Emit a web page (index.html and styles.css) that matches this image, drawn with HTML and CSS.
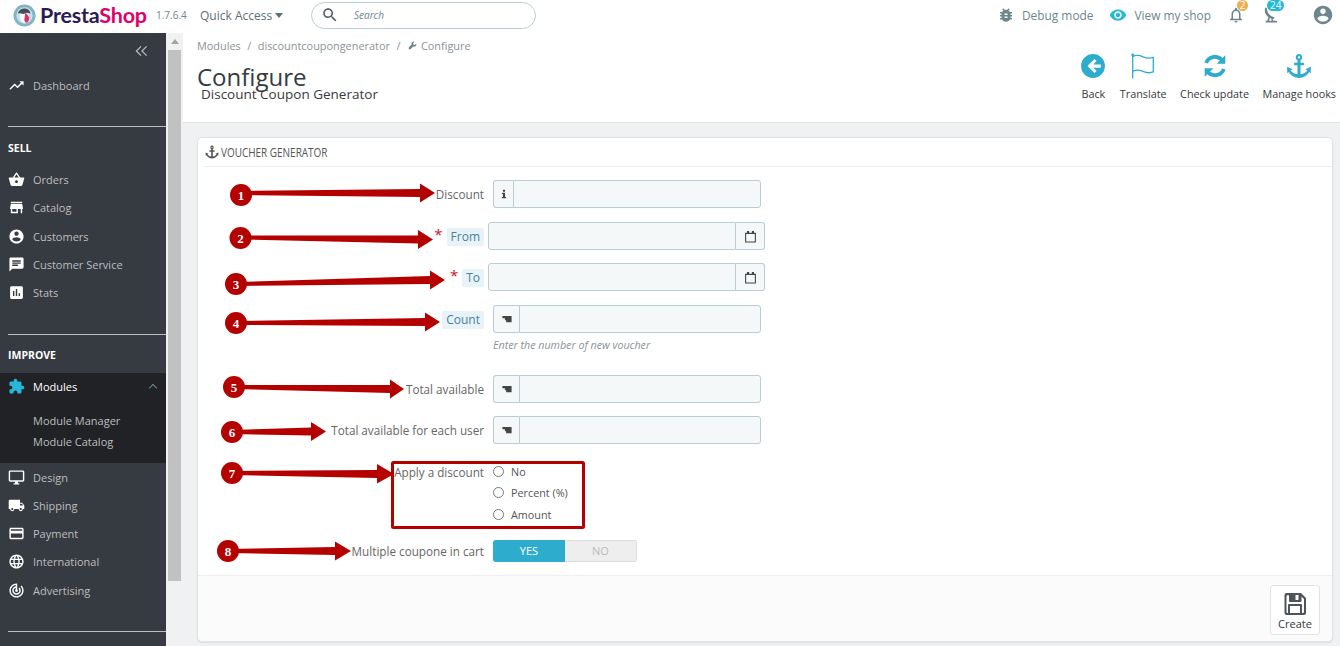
FILE: index.html
```html
<!DOCTYPE html>
<html lang="en">
<head>
<meta charset="utf-8">
<title>Configure - Discount Coupon Generator</title>
<link rel="stylesheet" href="styles.css">
</head>
<body>
<svg class="sprite" aria-hidden="true">
  <symbol id="i-trend" viewBox="0 0 24 24"><path d="M16 6l2.29 2.29-4.88 4.88-4-4L2 16.59 3.41 18l6-6 4 4 6.3-6.29L22 12V6z"/></symbol>
  <symbol id="i-basket" viewBox="0 0 24 24"><path d="M17.21 9l-4.38-6.56c-.19-.28-.51-.42-.83-.42-.32 0-.64.14-.83.43L6.79 9H2c-.55 0-1 .45-1 1 0 .09.01.18.04.27l2.54 9.27c.23.84 1 1.46 1.92 1.46h13c.92 0 1.69-.62 1.93-1.46l2.54-9.27L23 10c0-.55-.45-1-1-1h-4.79zM9 9l3-4.4L15 9H9zm3 8c-1.1 0-2-.9-2-2s.9-2 2-2 2 .9 2 2-.9 2-2 2z"/></symbol>
  <symbol id="i-store" viewBox="0 0 24 24"><path d="M20 4H4v2h16V4zm1 10v-2l-1-5H4l-1 5v2h1v6h10v-6h4v6h2v-6h1zm-9 4H6v-4h6v4z"/></symbol>
  <symbol id="i-account" viewBox="0 0 24 24"><path d="M12 2C6.48 2 2 6.48 2 12s4.48 10 10 10 10-4.48 10-10S17.52 2 12 2zm0 3c1.66 0 3 1.34 3 3s-1.34 3-3 3-3-1.34-3-3 1.34-3 3-3zm0 14.2c-2.5 0-4.71-1.28-6-3.22.03-1.99 4-3.08 6-3.08 1.99 0 5.97 1.09 6 3.08-1.29 1.94-3.5 3.22-6 3.22z"/></symbol>
  <symbol id="i-chat" viewBox="0 0 24 24"><path d="M20 2H4c-1.1 0-1.99.9-1.99 2L2 22l4-4h14c1.1 0 2-.9 2-2V4c0-1.1-.9-2-2-2zM6 9h12v2H6V9zm8 5H6v-2h8v2zm4-6H6V6h12v2z"/></symbol>
  <symbol id="i-stats" viewBox="0 0 24 24"><path d="M19 3H5c-1.1 0-2 .9-2 2v14c0 1.1.9 2 2 2h14c1.1 0 2-.9 2-2V5c0-1.1-.9-2-2-2zM9 17H7v-7h2v7zm4 0h-2V7h2v10zm4 0h-2v-4h2v4z"/></symbol>
  <symbol id="i-puzzle" viewBox="0 0 24 24"><path d="M20.5 11H19V7c0-1.1-.9-2-2-2h-4V3.5C13 2.12 11.88 1 10.5 1S8 2.12 8 3.5V5H4c-1.1 0-1.99.9-1.99 2v3.8H3.5c1.49 0 2.7 1.21 2.7 2.7s-1.21 2.7-2.7 2.7H2V20c0 1.1.9 2 2 2h3.8v-1.5c0-1.49 1.21-2.7 2.7-2.7 1.49 0 2.7 1.21 2.7 2.7V22H17c1.1 0 2-.9 2-2v-4h1.5c1.38 0 2.5-1.12 2.5-2.5S21.88 11 20.5 11z"/></symbol>
  <symbol id="i-desktop" viewBox="0 0 24 24"><path d="M21 2H3c-1.1 0-2 .9-2 2v12c0 1.1.9 2 2 2h7v2H8v2h8v-2h-2v-2h7c1.1 0 2-.9 2-2V4c0-1.1-.9-2-2-2zm0 14H3V4h18v12z"/></symbol>
  <symbol id="i-truck" viewBox="0 0 24 24"><path d="M20 8h-3V4H3c-1.1 0-2 .9-2 2v11h2c0 1.66 1.34 3 3 3s3-1.34 3-3h6c0 1.66 1.34 3 3 3s3-1.34 3-3h2v-5l-3-4zM6 18.5c-.83 0-1.5-.67-1.5-1.5s.67-1.5 1.5-1.5 1.5.67 1.5 1.5-.67 1.5-1.5 1.5zm13.5-9l1.96 2.5H17V9.5h2.5zm-1.5 9c-.83 0-1.5-.67-1.5-1.5s.67-1.5 1.5-1.5 1.5.67 1.5 1.5-.67 1.5-1.5 1.5z"/></symbol>
  <symbol id="i-card" viewBox="0 0 24 24"><path d="M20 4H4c-1.11 0-1.99.89-1.99 2L2 18c0 1.11.89 2 2 2h16c1.11 0 2-.89 2-2V6c0-1.11-.89-2-2-2zm0 14H4v-6h16v6zm0-10H4V6h16v2z"/></symbol>
  <symbol id="i-globe" viewBox="0 0 24 24"><path d="M11.99 2C6.47 2 2 6.48 2 12s4.47 10 9.99 10C17.52 22 22 17.52 22 12S17.52 2 11.99 2zm6.93 6h-2.95c-.32-1.25-.78-2.45-1.38-3.56 1.84.63 3.37 1.91 4.33 3.56zM12 4.04c.83 1.2 1.48 2.53 1.91 3.96h-3.82c.43-1.43 1.08-2.76 1.91-3.96zM4.26 14C4.1 13.36 4 12.69 4 12s.1-1.36.26-2h3.38c-.08.66-.14 1.32-.14 2 0 .68.06 1.34.14 2H4.26zm.82 2h2.95c.32 1.25.78 2.45 1.38 3.56-1.84-.63-3.37-1.9-4.33-3.56zm2.95-8H5.08c.96-1.66 2.49-2.93 4.33-3.56C8.81 5.55 8.35 6.75 8.03 8zM12 19.96c-.83-1.2-1.48-2.53-1.91-3.96h3.82c-.43 1.43-1.08 2.76-1.91 3.96zM14.34 14H9.66c-.09-.66-.16-1.32-.16-2 0-.68.07-1.35.16-2h4.68c.09.65.16 1.32.16 2 0 .68-.07 1.34-.16 2zm.25 5.56c.6-1.11 1.06-2.31 1.38-3.56h2.95c-.96 1.65-2.49 2.93-4.33 3.56zM16.36 14c.08-.66.14-1.32.14-2 0-.68-.06-1.34-.14-2h3.38c.16.64.26 1.31.26 2s-.1 1.36-.26 2h-3.38z"/></symbol>
  <symbol id="i-radar" viewBox="0 0 24 24"><path d="M19.07 4.93l-1.41 1.41C19.1 7.79 20 9.79 20 12c0 4.42-3.58 8-8 8s-8-3.58-8-8c0-4.08 3.05-7.44 7-7.93v2.02C8.16 6.57 6 9.03 6 12c0 3.31 2.69 6 6 6s6-2.69 6-6c0-1.66-.67-3.16-1.76-4.24l-1.41 1.41C15.55 9.9 16 10.9 16 12c0 2.21-1.79 4-4 4s-4-1.79-4-4c0-1.86 1.28-3.41 3-3.86v2.14c-.6.35-1 .98-1 1.72 0 1.1.9 2 2 2s2-.9 2-2c0-.74-.4-1.38-1-1.72V2h-1C6.48 2 2 6.48 2 12s4.48 10 10 10 10-4.48 10-10c0-2.76-1.12-5.26-2.93-7.07z"/></symbol>
  <symbol id="i-bug" viewBox="0 0 24 24"><path d="M20 8h-2.81c-.45-.78-1.07-1.45-1.82-1.96L17 4.41 15.59 3l-2.17 2.17C12.96 5.06 12.49 5 12 5c-.49 0-.96.06-1.41.17L8.41 3 7 4.41l1.62 1.63C7.88 6.55 7.26 7.22 6.81 8H4v2h2.09c-.05.33-.09.66-.09 1v1H4v2h2v1c0 .34.04.67.09 1H4v2h2.81c1.04 1.79 2.97 3 5.19 3s4.15-1.21 5.19-3H20v-2h-2.09c.05-.33.09-.66.09-1v-1h2v-2h-2v-1c0-.34-.04-.67-.09-1H20V8zm-6 8h-4v-2h4v2zm0-4h-4v-2h4v2z"/></symbol>
  <symbol id="i-eye" viewBox="0 0 24 24"><path d="M12 4.5C7 4.5 2.73 7.61 1 12c1.73 4.39 6 7.5 11 7.5s9.27-3.11 11-7.5c-1.73-4.39-6-7.5-11-7.5zM12 17c-2.76 0-5-2.24-5-5s2.24-5 5-5 5 2.24 5 5-2.24 5-5 5zm0-8c-1.66 0-3 1.34-3 3s1.34 3 3 3 3-1.34 3-3-1.34-3-3-3z"/></symbol>
  <symbol id="i-bell" viewBox="0 0 24 24"><path d="M12 22c1.1 0 2-.9 2-2h-4c0 1.1.9 2 2 2zm6-6v-5c0-3.07-1.63-5.64-4.5-6.32V4c0-.83-.67-1.5-1.5-1.5s-1.5.67-1.5 1.5v.68C7.64 5.36 6 7.92 6 11v5l-2 2v1h16v-1l-2-2zm-2 1H8v-6c0-2.48 1.51-4.5 4-4.5s4 2.02 4 4.5v6z"/></symbol>
  <symbol id="i-dish" viewBox="0 0 24 24"><path d="M4.500 2C2 8 6 16 15 17.500l2-2.500C10.500 14 6.500 9 6.500 3zM8.500 15l-1.500 4.500H5V22h15v-2.500h-5l-.8-2.300-2-.6.800 2.900H9.500l1-3.300z"/></symbol>
  <symbol id="i-search" viewBox="0 0 24 24"><path d="M15.500 14h-.79l-.28-.27C15.410 12.590 16 11.110 16 9.500 16 5.910 13.090 3 9.500 3S3 5.910 3 9.500 5.910 16 9.500 16c1.610 0 3.090-.59 4.230-1.570l.27.28v.79l5 4.990L20.490 19l-4.990-5zm-6 0C7.010 14 5 11.990 5 9.500S7.010 5 9.500 5 14 7.010 14 9.500 11.990 14 9.500 14z"/></symbol>
  <symbol id="i-anchor" viewBox="0 0 24 24"><path d="M12 1a3 3 0 0 0-1.400 5.650V9H7.500v2.400h3.100v8.300c-3-.3-5.300-1.700-6.300-3.700l1.800-1.100L1 12.800l.2 5.800 1.500-1c1.600 3 5 5.400 9.300 5.400s7.700-2.400 9.300-5.400l1.500 1 .2-5.800-5.100 2.100 1.800 1.100c-1 2-3.300 3.400-6.300 3.700v-8.300h3.100V9h-3.100V6.650A3 3 0 0 0 12 1zm0 1.900a1.100 1.100 0 1 1 0 2.200 1.100 1.100 0 0 1 0-2.200z"/></symbol>
  <symbol id="i-back" viewBox="0 0 24 24"><path d="M12 1a11 11 0 1 0 0 22 11 11 0 0 0 0-22zm1.400 4.500l1.900 1.900-3.100 3.100h7v3h-7l3.100 3.100-1.900 1.900L6.900 12z"/></symbol>
  <symbol id="i-flag" viewBox="0 0 24 24"><path class="flag-line" d="M2.500 1.500v22M2.500 3.500c3-2 6-1.500 9.500 0s6 1.700 9.500.5v13.500c-3.500 1.300-6 1-9.500-.5s-6.500-1.800-9.500 0"/><circle cx="2.500" cy="1.800" r="1.300"/></symbol>
  <symbol id="i-sync" viewBox="0 0 24 24"><path d="M21.500 2v8h-8l3-3a6.800 6.800 0 0 0-11 2.800l-3.300-1A10.200 10.200 0 0 1 19 4.500zM2.500 22v-8h8l-3 3a6.800 6.800 0 0 0 11-2.800l3.300 1A10.200 10.200 0 0 1 5 19.500z"/></symbol>
  <symbol id="i-save" viewBox="0 0 24 24"><path d="M3.500 1H18l5 5v15a2 2 0 0 1-2 2H3.500a2 2 0 0 1-2-2V3a2 2 0 0 1 2-2zm1 2.200a1 1 0 0 0-1 1V20a1 1 0 0 0 1 1H5v-8a1 1 0 0 1 1-1h12a1 1 0 0 1 1 1v8h1a1 1 0 0 0 1-1V7l-2.500-2.500V9a1 1 0 0 1-1 1H7a1 1 0 0 1-1-1V3.200zM7 14v7h10v-7zm5.500-11v5h3V3z"/></symbol>
  <symbol id="i-cal" viewBox="0 0 24 24"><path fill-rule="evenodd" d="M2 5h3.500V2h4v3h5V2h4v3H22v18H2zm2 2.500V21h16V7.500z"/></symbol>
  <symbol id="i-ticket" viewBox="0 0 24 24"><path d="M1 5h22v15H10v-5H7v-5H1z"/></symbol>
  <symbol id="i-info" viewBox="0 0 24 24"><path d="M9.500 2h5v4.500h-5zM7 9h7.500v10H17v3H7v-3h2.500v-7H7z"/></symbol>
  <symbol id="i-wrench" viewBox="0 0 24 24"><path d="M22 6.500l-4 4-3.500-1-1-3.500 4-4a6.500 6.500 0 0 0-8.300 8.300L2 17.500V22h4.500l7.200-7.200A6.500 6.500 0 0 0 22 6.500z"/></symbol>
  <symbol id="i-dbl-left" viewBox="0 0 14 12"><path class="chev-line" d="M6.500 1L1.500 6l5 5M12.500 1L7.500 6l5 5"/></symbol>
</svg>

<header class="topbar">
  <a class="logo">
    <svg class="logo-mark" viewBox="0 0 24 24" aria-hidden="true">
      <circle class="lm-ring" cx="12" cy="12" r="11.500"/>
      <circle class="lm-sky" cx="12" cy="12" r="8.500"/>
      <path class="lm-head" d="M5 10c1-4 5-6 9-5 3 .8 4 3 4 5-2-1.200-5-1-7 .5-2-1-4-1.200-6-.5z"/>
      <path class="lm-belly" d="M7 11c2-1 5-1 6 1l-1 8c-3-.5-5-5-5-9z"/>
      <path class="lm-pink" d="M13 9l4 5c0 3-1.500 5-3 5.500-2-1-2.500-3-2-5z"/>
    </svg>
    <span class="logo-text"><span class="logo-presta">Presta</span><span class="logo-shop">Shop</span></span>
  </a>
  <span class="version">1.7.6.4</span>
  <span class="quick">Quick Access<i class="caret"></i></span>
  <div class="search">
    <svg class="search-icon"><use href="#i-search"/></svg>
    <span class="search-text">Search</span>
  </div>
  <div class="top-right">
    <span class="top-link"><svg class="top-icon"><use href="#i-bug"/></svg>Debug mode</span>
    <span class="top-link"><svg class="top-icon eye"><use href="#i-eye"/></svg>View my shop</span>
    <span class="notif"><svg class="notif-icon"><use href="#i-bell"/></svg><b class="badge badge-orange">2</b></span>
    <span class="notif"><svg class="notif-icon"><use href="#i-dish"/></svg><b class="badge badge-blue">24</b></span>
    <svg class="user-icon"><use href="#i-account"/></svg>
  </div>
</header>

<div class="shell">
  <nav class="sidebar">
    <div class="collapse"><svg class="collapse-icon"><use href="#i-dbl-left"/></svg></div>
    <a class="nav-item"><svg class="nav-icon"><use href="#i-trend"/></svg>Dashboard</a>
    <hr class="nav-rule first-rule">
    <div class="nav-title">SELL</div>
    <a class="nav-item"><svg class="nav-icon"><use href="#i-basket"/></svg>Orders</a>
    <a class="nav-item"><svg class="nav-icon"><use href="#i-store"/></svg>Catalog</a>
    <a class="nav-item"><svg class="nav-icon"><use href="#i-account"/></svg>Customers</a>
    <a class="nav-item"><svg class="nav-icon"><use href="#i-chat"/></svg>Customer Service</a>
    <a class="nav-item"><svg class="nav-icon"><use href="#i-stats"/></svg>Stats</a>
    <hr class="nav-rule">
    <div class="nav-title improve">IMPROVE</div>
    <div class="nav-group">
      <a class="nav-item active"><svg class="nav-icon"><use href="#i-puzzle"/></svg>Modules<i class="chev"></i></a>
      <div class="sub-list">
        <a class="sub-item">Module Manager</a>
        <a class="sub-item">Module Catalog</a>
      </div>
    </div>
    <a class="nav-item"><svg class="nav-icon"><use href="#i-desktop"/></svg>Design</a>
    <a class="nav-item"><svg class="nav-icon"><use href="#i-truck"/></svg>Shipping</a>
    <a class="nav-item"><svg class="nav-icon"><use href="#i-card"/></svg>Payment</a>
    <a class="nav-item"><svg class="nav-icon"><use href="#i-globe"/></svg>International</a>
    <a class="nav-item"><svg class="nav-icon"><use href="#i-radar"/></svg>Advertising</a>
    <hr class="nav-rule">
  </nav>

  <div class="scrollbar"><i class="scroll-up"></i><div class="scroll-thumb"></div></div>

  <main class="main">
    <section class="page-head">
      <div class="crumbs">
        <span>Modules</span><span class="sep">/</span><span>discountcoupongenerator</span><span class="sep">/</span><span class="crumb-last"><svg class="crumb-icon"><use href="#i-wrench"/></svg>Configure</span>
      </div>
      <div class="head-row">
        <div class="head-titles">
          <h1 class="title">Configure</h1>
          <p class="subtitle">Discount Coupon Generator</p>
        </div>
        <div class="toolbar">
          <a class="tool"><svg class="tool-icon"><use href="#i-back"/></svg>Back</a>
          <a class="tool"><svg class="tool-icon"><use href="#i-flag"/></svg>Translate</a>
          <a class="tool"><svg class="tool-icon"><use href="#i-sync"/></svg>Check update</a>
          <a class="tool"><svg class="tool-icon"><use href="#i-anchor"/></svg>Manage hooks</a>
        </div>
      </div>
    </section>

    <section class="panel">
      <h2 class="panel-head"><svg class="panel-icon"><use href="#i-anchor"/></svg><span class="panel-title">VOUCHER GENERATOR</span></h2>
      <form class="form">
        <div class="row gap14">
          <label class="lbl">Discount</label>
          <div class="field"><span class="addon addon-s"><svg class="addon-icon"><use href="#i-info"/></svg></span><span class="input"></span></div>
        </div>
        <div class="row gap13">
          <label class="lbl"><span class="req">*</span><span class="chip">From</span></label>
          <div class="field date"><span class="input"></span><span class="addon addon-r"><svg class="addon-icon cal"><use href="#i-cal"/></svg></span></div>
        </div>
        <div class="row gap14">
          <label class="lbl"><span class="req">*</span><span class="chip">To</span></label>
          <div class="field date"><span class="input"></span><span class="addon addon-r"><svg class="addon-icon cal"><use href="#i-cal"/></svg></span></div>
        </div>
        <div class="row gap-hint">
          <label class="lbl"><span class="chip">Count</span></label>
          <div>
            <div class="field"><span class="addon addon-m"><svg class="addon-icon"><use href="#i-ticket"/></svg></span><span class="input"></span></div>
            <p class="hint">Enter the number of new voucher</p>
          </div>
        </div>
        <div class="row gap13">
          <label class="lbl">Total available</label>
          <div class="field"><span class="addon addon-m"><svg class="addon-icon"><use href="#i-ticket"/></svg></span><span class="input"></span></div>
        </div>
        <div class="row gap-radio">
          <label class="lbl">Total available for each user</label>
          <div class="field"><span class="addon addon-m"><svg class="addon-icon"><use href="#i-ticket"/></svg></span><span class="input"></span></div>
        </div>
        <div class="row gap-switch">
          <label class="lbl lbl-top">Apply a discount</label>
          <div class="radios">
            <span class="radio"><i class="dot"></i>No</span>
            <span class="radio"><i class="dot"></i>Percent (%)</span>
            <span class="radio"><i class="dot"></i>Amount</span>
          </div>
        </div>
        <div class="row">
          <label class="lbl">Multiple coupone in cart</label>
          <div class="switch"><span class="sw-on">YES</span><span class="sw-off">NO</span></div>
        </div>
      </form>
      <footer class="panel-foot">
        <button class="save" type="button"><svg class="save-icon"><use href="#i-save"/></svg>Create</button>
      </footer>
    </section>
  </main>
</div>

<svg class="annot" viewBox="0 0 1340 646" aria-hidden="true">
  <rect class="annot-box" x="392.500" y="462.500" width="191" height="65" rx="1"/>
  <g class="annot-arrow">
    <polygon points="241,191 420,189 420,183.500 435,193 420,202.500 420,197 241,195"/>
    <polygon points="240,235.500 418,235.500 418,230 433,239.500 418,249 418,243.500 240,239.500"/>
    <polygon points="236,282 430,276 430,270.500 445,280 430,289.500 430,284 236,286"/>
    <polygon points="236,321 425,318 425,312.500 440,322 425,331.500 425,326 236,325"/>
    <polygon points="234,385 390,385 390,379.500 404,389 390,398.500 390,393 234,389"/>
    <polygon points="232,430 311,427.500 311,422 326,431.500 311,441 311,435.500 232,434"/>
    <polygon points="232,471 377,470 377,464 394,474 377,483.500 377,478 232,475"/>
    <polygon points="228,549 335,547 335,541.500 351,551 335,560.500 335,555 228,553"/>
    <circle cx="241" cy="195" r="11"/><circle cx="240.500" cy="238" r="11"/>
    <circle cx="236" cy="284" r="11"/><circle cx="236" cy="323" r="11"/>
    <circle cx="234" cy="387" r="11"/><circle cx="232" cy="432" r="11"/>
    <circle cx="232" cy="473" r="11"/><circle cx="228" cy="551" r="11"/>
  </g>
  <g class="annot-num">
    <text x="241" y="199.500">1</text><text x="240.500" y="242.500">2</text>
    <text x="236" y="288.500">3</text><text x="236" y="327.500">4</text>
    <text x="234" y="391.500">5</text><text x="232" y="436.500">6</text>
    <text x="232" y="477.500">7</text><text x="228" y="555.500">8</text>
  </g>
</svg>
</body>
</html>
```

FILE: styles.css
```css
* { box-sizing: border-box; }
html, body { margin: 0; height: 646px; overflow: hidden; }
body { font-family: "Open Sans", "Liberation Sans", sans-serif; font-size: 11px; color: #363a41; background: #eff1f2; display: flex; flex-direction: column; position: relative; }
.sprite { display: none; }
svg { fill: currentColor; flex: none; }
p, h1, h2 { margin: 0; font-weight: 400; }

/* top bar */
.topbar { height: 33px; flex: none; background: #fff; display: flex; align-items: center; padding: 0 0 3px 13px; }
.logo { display: flex; align-items: center; width: 143px; }
.logo-mark { width: 23px; height: 23px; margin-right: 4px; }
.lm-ring { fill: #7fb5c4; }
.lm-sky { fill: #c9dfe6; }
.lm-head { fill: #4a4a58; }
.lm-belly { fill: #fff; }
.lm-pink { fill: #d6336c; }
.logo-text { font-family: Lato, "Open Sans", sans-serif; font-size: 21.500px; font-weight: 700; letter-spacing: -.2px; }
.logo-presta { color: #2c1a55; }
.logo-shop { color: #df0067; }
.version { font-size: 10px; color: #6c868e; width: 44px; }
.quick { font-size: 12px; color: #5e6e73; width: 111px; display: flex; align-items: center; }
.caret { border: 4px solid transparent; border-top: 5px solid #5e6e73; border-bottom: 0; margin-left: 3px; }
.search { width: 225px; height: 27px; border: 1px solid #bbcdd2; border-radius: 14px; display: flex; align-items: center; padding-left: 9px; background: #fff; }
.search-icon { width: 18px; height: 18px; color: #4d5a5e; }
.search-text { font-size: 10px; font-style: italic; color: #6c868e; margin-left: 15px; }
.top-right { margin-left: auto; display: flex; align-items: center; padding-right: 6px; }
.top-link { font-size: 11.900px; color: #6c868e; display: flex; align-items: center; margin-right: 16px; }
.top-icon { width: 18px; height: 18px; color: #6c868e; margin-right: 7px; }
.top-icon.eye { color: #25b9d7; }
.notif { position: relative; display: flex; width: 18px; height: 18px; margin-right: 17px; color: #6c868e; }
.notif-icon { width: 18px; height: 18px; }
.badge { position: absolute; top: -6px; left: 10px; min-width: 11px; height: 11px; padding: 0 2px; border-radius: 6px; font-size: 10px; line-height: 11px; font-weight: 400; color: #fff; text-align: center; }
.badge-orange { background: #f0ad4e; }
.badge-blue { background: #25b9d7; left: 5px; padding: 0 3px; }
.user-icon { width: 22px; height: 22px; color: #6c868e; margin-left: 15px; }

/* shell */
.shell { flex: 1; display: flex; min-height: 0; }
.sidebar { width: 166px; flex: none; background: #363a41; color: #bebebe; }
.collapse { height: 38px; padding: 12px 18px 0 0; display: flex; justify-content: flex-end; align-items: flex-start; color: #bebebe; }
.collapse-icon { width: 13px; height: 12px; }
.chev-line { fill: none; stroke: currentColor; stroke-width: 1.300; }
.nav-item { display: flex; align-items: center; height: 28.25px; padding-left: 8px; font-size: 11px; }
.nav-icon { width: 17px; height: 17px; color: #fff; margin-right: 8px; }
.nav-rule { margin: 27px 0 0 8px; height: 1px; border: 0; background: #bebebe; }
.first-rule { margin-top: 27px; }
.nav-title { height: 38.200px; padding: 12px 0 0 8px; font-size: 10.500px; line-height: 18px; font-weight: 700; color: #fff; }
.nav-title.improve { height: 38px; padding-top: 11px; }
.nav-group { background: #202226; height: 90.200px; }
.nav-item.active { color: #fff; height: 28px; position: relative; }
.nav-item.active .nav-icon { color: #25b9d7; }
.chev { position: absolute; right: 10px; top: 12px; width: 6px; height: 6px; border-left: 1px solid #6c868e; border-top: 1px solid #6c868e; transform: rotate(45deg); }
.sub-list { padding-top: 9px; }
.sub-item { display: block; height: 21px; line-height: 21px; padding-left: 33px; font-size: 11px; }

/* scrollbar */
.scrollbar { width: 17px; flex: none; background: #f1f1f1; padding: 6px 2px 0; position: relative; }
.scroll-up { display: block; margin: 0 auto; width: 0; border: 4px solid transparent; border-top: 0; border-bottom: 5px solid #a3a3a3; }
.scroll-thumb { height: 531px; margin-top: 6px; background: #c1c1c1; }

/* main */
.main { flex: 1; min-width: 0; display: flex; flex-direction: column; }
.page-head { height: 90px; flex: none; background: #fff; border-bottom: 1px solid #dfe3e4; padding: 5px 4px 0 14px; }
.crumbs { font-size: 10.900px; line-height: 15px; color: #8a9397; display: flex; }
.sep { margin: 0 6.500px; }
.crumb-icon { width: 9px; height: 9px; margin-right: 4px; margin-left: 1px; color: #6c868e; }
.crumb-last { display: flex; align-items: center; }
.head-row { display: flex; justify-content: space-between; }
.head-titles { padding-top: 9px; }
.title { font-size: 24px; line-height: 30px; color: #363a41; }
.subtitle { font-size: 13.500px; line-height: 19px; margin: -7px 0 0 4px; color: #363a41; }
.toolbar { display: flex; gap: 13.500px; margin-top: -1px; }
.tool { display: flex; flex-direction: column; align-items: center; font-size: 10.800px; line-height: 15px; color: #363a41; }
.tool-icon { width: 26px; height: 26px; margin: 1px 0 7px; color: #2eacce; }
.flag-line { fill: none; stroke: currentColor; stroke-width: 1.200; }

/* panel */
.panel { margin: 14px 7px 0 14px; height: 505px; flex: none; background: #fff; border: 1px solid #dfe3e4; border-radius: 5px; display: flex; flex-direction: column; box-shadow: 0 1px 2px rgba(0,0,0,.08); }
.panel-head { height: 29px; margin: 0 0 0 6px; border-bottom: 1px solid #eee; display: flex; align-items: center; font-size: 12px; color: #555; }
.panel-title { display: inline-block; transform: scaleX(.83); transform-origin: left center; white-space: nowrap; }
.panel-icon { width: 14px; height: 14px; margin: 0 2px 0 1px; color: #555; }
.form { flex: 1; padding-top: 13px; }
.row { display: grid; grid-template-columns: 286px 268px; column-gap: 9px; }
.gap14 { margin-bottom: 14px; }
.gap13 { margin-bottom: 13px; }
.gap-hint { margin-bottom: 0; height: 70px; }
.gap-radio { margin-bottom: 17px; }
.gap-switch { margin-bottom: 15px; }
.lbl { display: flex; justify-content: flex-end; align-items: center; font-size: 11.700px; color: #666; height: 28px; }
.lbl-top { height: 21px; }
.req { color: #c3142a; font-size: 15px; margin-right: 4px; position: relative; top: -2px; }
.chip { background: #e8f3f9; color: #4a8099; border-radius: 2px; padding: 0 4px; height: 18px; line-height: 18px; font-size: 12px; margin-top: 2px; }
.field { display: flex; height: 28px; }
.field.date { width: 277px; margin-left: -5px; }
.input { flex: 1; background: #f5f8f9; border: 1px solid #bbcdd2; border-radius: 3px; }
.addon { flex: none; display: flex; align-items: center; justify-content: center; background: #f5f8f9; border: 1px solid #bbcdd2; color: #444; }
.addon-s { width: 20px; border-radius: 3px 0 0 3px; border-right: 0; }
.addon-m { width: 26px; border-radius: 3px 0 0 3px; border-right: 0; }
.addon-s + .input, .addon-m + .input { border-radius: 0 3px 3px 0; }
.addon-r { width: 29px; border-radius: 0 3px 3px 0; border-left: 0; }
.date .input { border-radius: 3px 0 0 3px; }
.addon-icon { width: 10px; height: 10px; }
.addon-icon.cal { width: 13px; height: 13px; }
.hint { font-size: 10.700px; font-style: italic; color: #8a9397; margin-top: 5px; line-height: 14px; }
.radios { display: flex; flex-direction: column; }
.radio { display: flex; align-items: center; height: 21.300px; font-size: 10.800px; color: #555; }
.dot { width: 11px; height: 11px; border: 1px solid #777; border-radius: 50%; margin-right: 7px; background: #fff; }
.switch { display: flex; width: 144px; height: 22px; font-size: 11px; line-height: 22px; text-align: center; border-radius: 3px; overflow: hidden; }
.sw-on { width: 72px; background: #2eacce; color: #fff; }
.sw-off { width: 72px; background: #eee; color: #bbb; border: 1px solid #ddd; border-left: 0; line-height: 20px; }
.row:last-child .lbl { height: 22px; }

.panel-foot { height: 66px; flex: none; border-top: 1px solid #eee; background: #fbfbfb; border-radius: 0 0 5px 5px; display: flex; justify-content: flex-end; padding: 9px 12px 0 0; }
.save { width: 50px; height: 50px; background: #fff; border: 1px solid #dfe3e4; border-radius: 3px; font: inherit; font-size: 11px; color: #363a41; display: flex; flex-direction: column; align-items: center; padding: 6px 0 0; line-height: 14px; }
.save-icon { width: 24px; height: 24px; color: #4d5559; margin-bottom: 1px; }

/* annotations painted over the screenshot */
.annot { position: absolute; left: 0; top: 0; width: 1340px; height: 646px; pointer-events: none; }
.annot-box { fill: none; stroke: #b50000; stroke-width: 3; }
.annot-arrow { fill: #b50000; }
.annot-num { fill: #fff; font-family: "Liberation Serif", serif; font-weight: 700; font-size: 13px; text-anchor: middle; }
```
